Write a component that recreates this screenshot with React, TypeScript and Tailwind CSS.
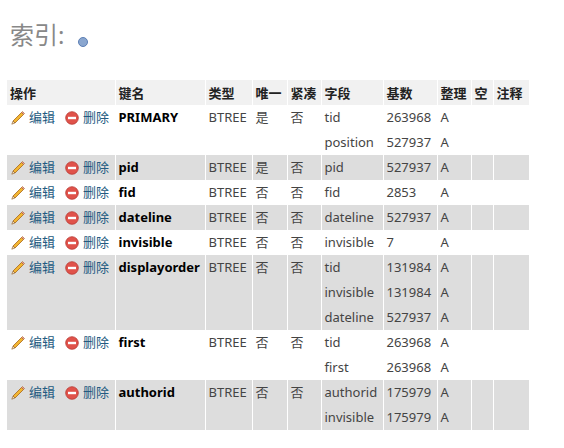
const rows: [string, string, string, [string, string][]][] = [
  ['PRIMARY', '是', '否', [['tid', '263968'], ['position', '527937']]],
  ['pid', '是', '否', [['pid', '527937']]],
  ['fid', '否', '否', [['fid', '2853']]],
  ['dateline', '否', '否', [['dateline', '527937']]],
  ['invisible', '否', '否', [['invisible', '7']]],
  ['displayorder', '否', '否', [['tid', '131984'], ['invisible', '131984'], ['dateline', '527937']]],
  ['first', '否', '否', [['tid', '263968'], ['first', '263968']]],
  ['authorid', '否', '否', [['authorid', '175979'], ['invisible', '175979']]],
]

function Pencil() {
  return (
    <svg width="16" height="16" viewBox="0 0 16 16" className="inline-block mr-[3px] -mt-[2px]">
      <path d="M3 11 L11.5 2.5 L13.5 4.5 L5 13 Z" fill="#f2b632" stroke="#a8661a" strokeWidth="0.8" />
      <path d="M11.5 2.5 L13.5 4.5 L14.5 3.5 L12.5 1.5 Z" fill="#e59aa0" stroke="#a8661a" strokeWidth="0.6" />
      <path d="M3 11 L5 13 L1.8 14.2 Z" fill="#f5deb3" stroke="#8a5a2a" strokeWidth="0.6" />
    </svg>
  )
}

function Minus() {
  return (
    <svg width="14" height="14" viewBox="0 0 14 14" className="inline-block mr-[4px] -mt-[2px]">
      <circle cx="7" cy="7" r="6.3" fill="#e0524a" stroke="#b83a34" strokeWidth="0.8" />
      <rect x="3" y="5.8" width="8" height="2.4" fill="#fff" />
    </svg>
  )
}

const th = 'text-left font-bold text-[#222] px-[3px] h-[25px] bg-[#f1f1f1] border-r border-white whitespace-nowrap'
const td = 'px-[3px] h-[25px] align-top pt-[3px] border-r border-white whitespace-nowrap'

export default function App() {
  return (
    <div className="w-[564px] h-[448px] overflow-hidden bg-white text-[13px] text-[#444]" style={{ fontFamily: '"Noto Sans", "Noto Sans CJK SC", sans-serif' }}>
      <div className="pl-[10px] pt-[17px] h-[80px] flex items-start">
        <span className="text-[24px] text-[#888] leading-[36px]">索引:</span>
        <span className="ml-[14px] mt-[20px] w-[10px] h-[10px] rounded-full bg-[#8aa6cf] border border-[#5d7fb5]" />
      </div>
      <table className="ml-[7px] w-[523px] border-collapse leading-[18px]">
        <thead>
          <tr>
            <th className={th + ' w-[108px]'}>操作</th>
            <th className={th + ' w-[90px]'}>键名</th>
            <th className={th + ' w-[47px]'}>类型</th>
            <th className={th + ' w-[35px]'}>唯一</th>
            <th className={th + ' w-[34px]'}>紧凑</th>
            <th className={th + ' w-[62px]'}>字段</th>
            <th className={th + ' w-[54px]'}>基数</th>
            <th className={th + ' w-[34px]'}>整理</th>
            <th className={th + ' w-[22px]'}>空</th>
            <th className={th}>注释</th>
          </tr>
        </thead>
        <tbody>
          {rows.map(([name, uniq, packed, cols], i) => {
            const bg = i % 2 ? 'bg-[#dddddd]' : 'bg-white'
            return cols.map(([f, c], j) => (
              <tr key={name + j} className={bg}>
                {j === 0 && (
                  <>
                    <td rowSpan={cols.length} className={td}>
                      <span className="text-[#235a81]"><Pencil />编辑</span>
                      <span className="ml-[10px] text-[#235a81]"><Minus />删除</span>
                    </td>
                    <td rowSpan={cols.length} className={td + ' font-bold text-black'}>{name}</td>
                    <td rowSpan={cols.length} className={td}>BTREE</td>
                    <td rowSpan={cols.length} className={td}>{uniq}</td>
                    <td rowSpan={cols.length} className={td}>{packed}</td>
                  </>
                )}
                <td className={td}>{f}</td>
                <td className={td}>{c}</td>
                <td className={td}>A</td>
                <td className={td}></td>
                <td className={td}></td>
              </tr>
            ))
          })}
        </tbody>
      </table>
    </div>
  )
}
